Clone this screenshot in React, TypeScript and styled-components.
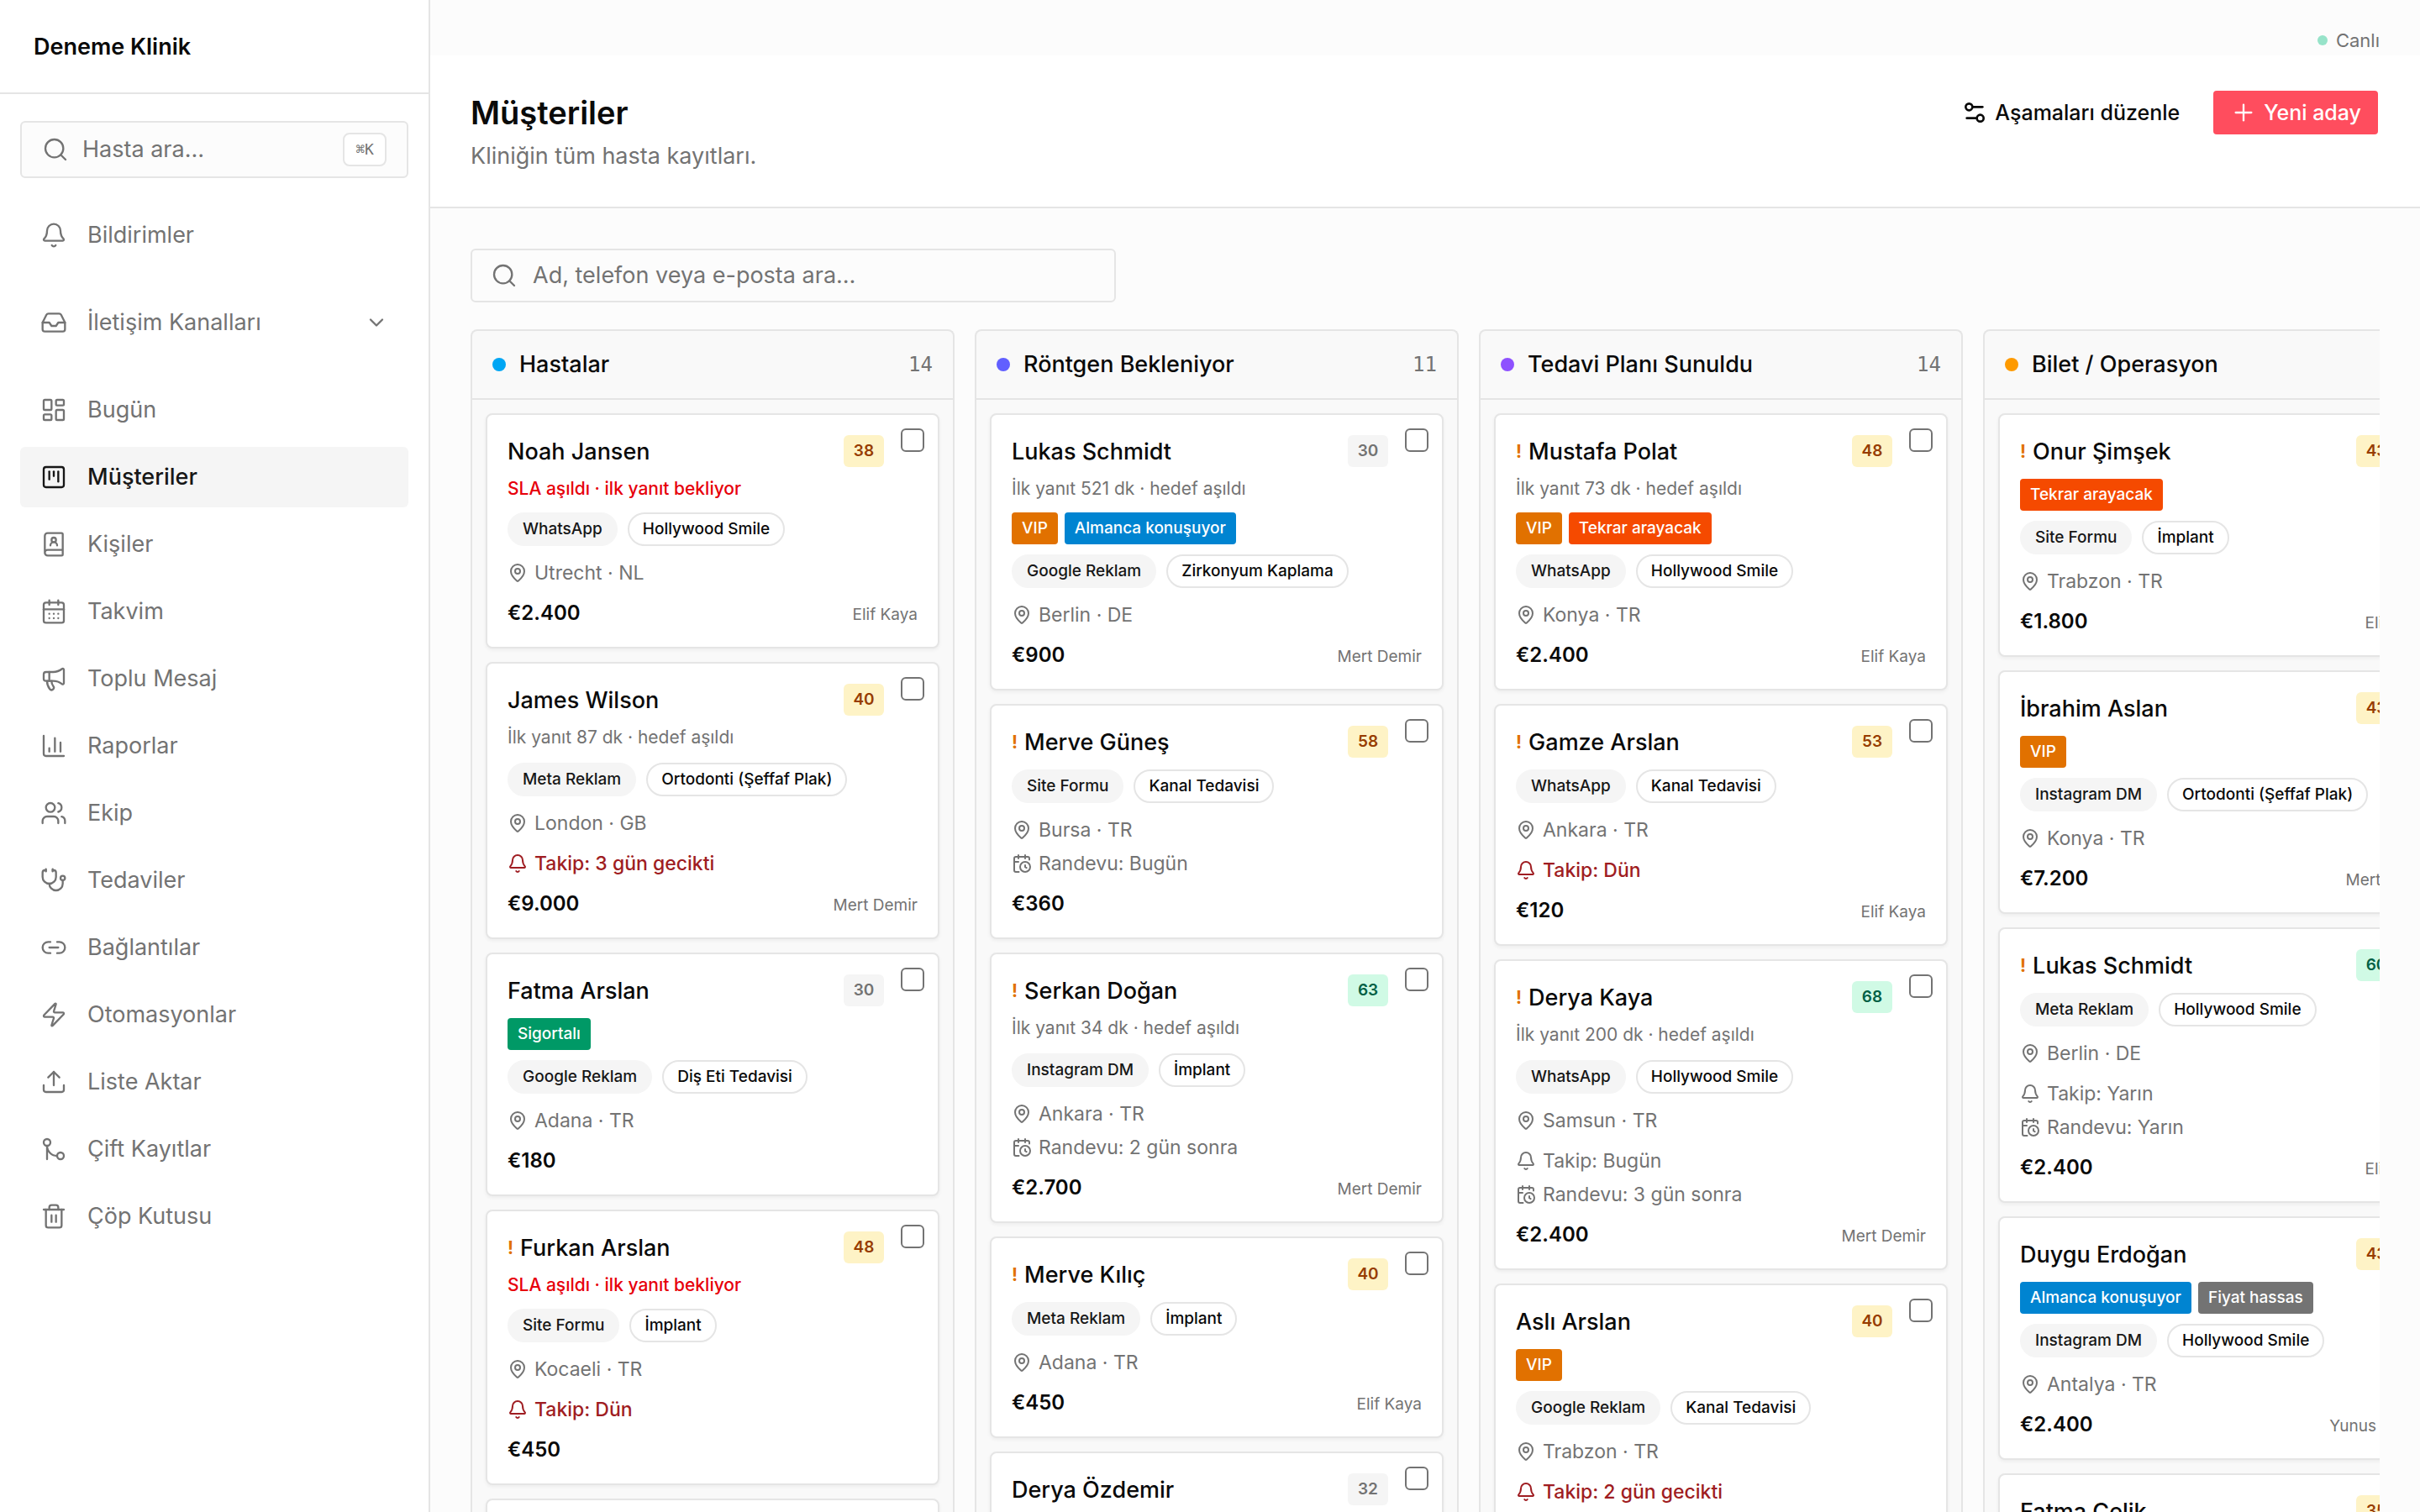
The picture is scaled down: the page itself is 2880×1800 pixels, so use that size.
import React from 'react';
import styled, { createGlobalStyle, css } from 'styled-components';
import {
  Bell,
  BookUser,
  CalendarClock,
  CalendarDays,
  ChartColumn,
  ChevronDown,
  Inbox,
  LayoutDashboard,
  Link2,
  LucideIcon,
  MapPin,
  Megaphone,
  Plus,
  Search,
  Settings2,
  SquareKanban,
  Stethoscope,
  Upload,
  Users,
  Zap,
} from 'lucide-react';

const c = {
  text: '#0a0a0a',
  soft: '#171717',
  muted: '#737373',
  line: '#e5e5e5',
  page: '#fcfcfc',
  panel: '#f9f9f9',
  fill: '#f5f5f5',
  white: '#ffffff',
  brand: '#ff4d5e',
  red: '#e7000b',
  late: '#9f1d22',
  amber: '#e17100',
};

const GlobalStyle = createGlobalStyle`
  *, *::before, *::after { box-sizing: border-box; }
  body {
    margin: 0;
    background: ${c.page};
    color: ${c.text};
    font-family: Inter, "Noto Sans", sans-serif;
    font-size: 28px;
    line-height: 40px;
    -webkit-font-smoothing: antialiased;
  }
  button, input { font: inherit; color: inherit; }
  h1, h2, h3, p, ul { margin: 0; padding: 0; font: inherit; list-style: none; }
`;

/* ---------- Shell ---------- */

const Shell = styled.div`
  display: flex;
  height: 100vh;
  overflow: hidden;
`;

const Sidebar = styled.aside`
  flex: none;
  width: 512px;
  background: ${c.white};
  border-right: 2px solid ${c.line};
`;

const ClinicName = styled.div`
  padding: 36px 40px 34px;
  border-bottom: 2px solid ${c.line};
  font-size: 27px;
  font-weight: 600;
`;

const SideBody = styled.div`
  display: flex;
  flex-direction: column;
  gap: 32px;
  padding: 32px 24px;
`;

const QuickSearch = styled.button`
  display: flex;
  align-items: center;
  gap: 16px;
  height: 68px;
  padding: 0 24px;
  border: 2px solid ${c.line};
  border-radius: 6px;
  background: ${c.page};
  color: ${c.muted};
  font-size: 27px;
  text-align: left;
`;

const Grow = styled.span`
  flex: 1;
`;

const Key = styled.kbd`
  width: 52px;
  border: 2px solid ${c.line};
  border-radius: 8px;
  background: ${c.white};
  font: 18px/36px "DejaVu Sans Mono", monospace;
  text-align: center;
`;

const NavList = styled.ul`
  display: flex;
  flex-direction: column;
  gap: 8px;
`;

const NavLink = styled.a<{ $active?: boolean }>`
  display: flex;
  align-items: center;
  gap: 24px;
  height: 72px;
  padding: 0 24px;
  border-radius: 6px;
  color: ${c.muted};
  font-size: 27px;
  text-decoration: none;
  ${(p) =>
    p.$active &&
    css`
      background: ${c.fill};
      color: ${c.soft};
      font-weight: 500;
    `}
`;

/* ---------- Main ---------- */

const Main = styled.main`
  flex: 1;
  min-width: 0;
  display: flex;
  flex-direction: column;
`;

const LiveBar = styled.div`
  display: flex;
  justify-content: flex-end;
  align-items: center;
  gap: 10px;
  padding: 32px 48px 2px;
  color: ${c.muted};
  font-size: 22px;
  line-height: 32px;
`;

const LiveDot = styled.span`
  width: 12px;
  height: 12px;
  border-radius: 50%;
  background: #97e3c9;
`;

const PageHeader = styled.header`
  display: flex;
  justify-content: space-between;
  align-items: flex-start;
  padding: 40px 48px;
  background: ${c.white};
  border-bottom: 2px solid ${c.line};
`;

const Title = styled.h1`
  font-size: 38px;
  font-weight: 600;
  line-height: 56px;
`;

const Subtitle = styled.p`
  margin-top: 4px;
  color: ${c.muted};
  font-size: 27px;
`;

const Actions = styled.div`
  display: flex;
  gap: 16px;
`;

const Action = styled.button<{ $primary?: boolean }>`
  display: flex;
  align-items: center;
  gap: 8px;
  height: 56px;
  padding: 0 20px;
  border: 2px solid transparent;
  border-radius: 6px;
  background: ${(p) => (p.$primary ? c.brand : 'transparent')};
  background-clip: padding-box;
  color: ${(p) => (p.$primary ? c.white : c.text)};
  font-size: 25px;
  font-weight: 500;
`;

const Body = styled.section`
  flex: 1;
  min-height: 0;
  display: flex;
  flex-direction: column;
  gap: 32px;
  padding: 48px 48px 0;
`;

const SearchField = styled.label`
  flex: none;
  display: flex;
  align-items: center;
  gap: 18px;
  width: 100%;
  max-width: 768px;
  height: 64px;
  padding: 0 22px;
  border: 2px solid ${c.line};
  border-radius: 6px;
  color: ${c.muted};
`;

const SearchInput = styled.input`
  flex: 1;
  min-width: 0;
  padding: 0;
  border: 0;
  outline: 0;
  background: transparent;
  font-size: 27px;
  &::placeholder {
    color: ${c.muted};
    opacity: 1;
  }
`;

/* ---------- Board ---------- */

const Board = styled.div`
  flex: 1;
  min-height: 0;
  display: flex;
  gap: 24px;
  overflow: hidden;
`;

const Column = styled.section`
  flex: none;
  width: 576px;
  background: ${c.panel};
  border: 2px solid ${c.line};
  border-bottom: 0;
  border-radius: 8px 8px 0 0;
`;

const ColumnHead = styled.header`
  display: flex;
  align-items: center;
  gap: 16px;
  height: 82px;
  padding: 0 24px;
  border-bottom: 2px solid ${c.line};
`;

const StageDot = styled.span<{ $color: string }>`
  width: 16px;
  height: 16px;
  border-radius: 50%;
  background: ${(p) => p.$color};
`;

const StageName = styled.h2`
  flex: 1;
  font-size: 27px;
  font-weight: 500;
`;

const Count = styled.span`
  color: ${c.muted};
  font-family: "DejaVu Sans Mono", monospace;
  font-size: 24px;
`;

const Cards = styled.div`
  display: flex;
  flex-direction: column;
  gap: 16px;
  padding: 16px;
`;

const CardBox = styled.article`
  min-height: 240px;
  padding: 24px;
  background: ${c.white};
  border: 2px solid ${c.line};
  border-radius: 8px;
  box-shadow: 0 2px 4px rgba(0, 0, 0, 0.05);
`;

const CardHead = styled.div`
  display: flex;
  align-items: flex-start;
  height: 40px;
`;

const Priority = styled.span`
  margin-right: 8px;
  color: ${c.amber};
  font-size: 21px;
  font-weight: 700;
`;

const Name = styled.h3`
  flex: 1;
  font-size: 27px;
  font-weight: 500;
`;

type Tone = 'amber' | 'green' | 'gray';

const tones: Record<Tone, [string, string]> = {
  amber: ['#fef3c6', '#973c00'],
  green: ['#d0fae5', '#006045'],
  gray: [c.fill, c.muted],
};

const Score = styled.span<{ $tone: Tone }>`
  width: 48px;
  border-radius: 6px;
  background: ${(p) => tones[p.$tone][0]};
  color: ${(p) => tones[p.$tone][1]};
  font-size: 19px;
  font-weight: 600;
  line-height: 38px;
  text-align: center;
`;

const Tick = styled.input`
  appearance: none;
  width: 28px;
  height: 28px;
  margin: -8px -8px 0 20px;
  border: 2px solid ${c.muted};
  border-radius: 6px;
  background: ${c.white};
`;

const Note = styled.p<{ $breach?: boolean }>`
  margin-top: 8px;
  color: ${(p) => (p.$breach ? c.red : c.muted)};
  font-size: 21px;
  font-weight: ${(p) => (p.$breach ? 500 : 400)};
  line-height: 32px;
`;

const TagRow = styled.div`
  display: flex;
  gap: 8px;
  margin-top: 12px;
`;

const Tag = styled.span<{ $color: string }>`
  padding: 0 12px;
  border-radius: 4px;
  background: ${(p) => p.$color};
  color: ${c.white};
  font-size: 19px;
  font-weight: 500;
  line-height: 38px;
`;

const ChipRow = styled.div<{ $loose?: boolean }>`
  display: flex;
  gap: 12px;
  margin-top: ${(p) => (p.$loose ? 14 : 12)}px;
`;

const Chip = styled.span<{ $outline?: boolean }>`
  padding: 0 16px;
  border: 2px solid ${(p) => (p.$outline ? c.line : c.fill)};
  border-radius: 20px;
  background: ${(p) => (p.$outline ? c.white : c.fill)};
  color: ${(p) => (p.$outline ? c.text : c.soft)};
  font-size: 19px;
  font-weight: 500;
  line-height: 36px;
  white-space: nowrap;
`;

const Meta = styled.p<{ $tight?: boolean; $late?: boolean }>`
  display: flex;
  align-items: center;
  gap: 8px;
  margin-top: ${(p) => (p.$tight ? 8 : 16)}px;
  color: ${(p) => (p.$late ? c.late : c.muted)};
  font-size: 23px;
  font-weight: ${(p) => (p.$late ? 500 : 400)};
  line-height: 32px;
`;

const CardFoot = styled.div`
  display: flex;
  align-items: baseline;
  justify-content: space-between;
  height: 32px;
  margin-top: 16px;
  line-height: 32px;
`;

const Price = styled.span`
  font-size: 24px;
  font-weight: 600;
`;

const Owner = styled.span`
  color: ${c.muted};
  font-size: 19px;
`;

/* ---------- Custom icons ---------- */

type IconProps = { size?: number; strokeWidth?: number };

const svgBase = (size: number, strokeWidth: number) => ({
  width: size,
  height: size,
  viewBox: '0 0 24 24',
  fill: 'none',
  stroke: 'currentColor',
  strokeWidth,
  strokeLinecap: 'round' as const,
  strokeLinejoin: 'round' as const,
  'aria-hidden': true,
});

const MergeIcon = ({ size = 32, strokeWidth = 1.75 }: IconProps) => (
  <svg {...svgBase(size, strokeWidth)}>
    <circle cx="18" cy="18" r="3" />
    <circle cx="6" cy="6" r="3" />
    <path d="M6 21V9a9 9 0 0 0 9 9" />
  </svg>
);

const TrashIcon = ({ size = 32, strokeWidth = 1.75 }: IconProps) => (
  <svg {...svgBase(size, strokeWidth)}>
    <path d="M3 6h18" />
    <path d="M19 6v14a2 2 0 0 1-2 2H7a2 2 0 0 1-2-2V6" />
    <path d="M8 6V4a2 2 0 0 1 2-2h4a2 2 0 0 1 2 2v2" />
    <path d="M10 11v6M14 11v6" />
  </svg>
);

/* ---------- Data ---------- */

type Lead = {
  name?: string;
  score?: number;
  priority?: boolean;
  breach?: boolean;
  reply?: number;
  tags?: string[];
  source?: string;
  treatment?: string;
  place?: string;
  follow?: string;
  late?: boolean;
  visit?: string;
  price?: string;
  owner?: string;
};

const tagColors: Record<string, string> = {
  VIP: c.amber,
  'Almanca konuşuyor': '#0084d1',
  'Tekrar arayacak': '#f54a00',
  Sigortalı: '#009966',
  'Fiyat hassas': c.muted,
};

type Stage = { name: string; color: string; count?: number; leads: Lead[] };

const stages: Stage[] = [
  {
    name: 'Hastalar',
    color: '#00a6f4',
    count: 14,
    leads: [
      { name: 'Noah Jansen', score: 38, breach: true, source: 'WhatsApp', treatment: 'Hollywood Smile', place: 'Utrecht · NL', price: '€2.400', owner: 'Elif Kaya' },
      { name: 'James Wilson', score: 40, reply: 87, source: 'Meta Reklam', treatment: 'Ortodonti (Şeffaf Plak)', place: 'London · GB', follow: '3 gün gecikti', late: true, price: '€9.000', owner: 'Mert Demir' },
      { name: 'Fatma Arslan', score: 30, tags: ['Sigortalı'], source: 'Google Reklam', treatment: 'Diş Eti Tedavisi', place: 'Adana · TR', price: '€180' },
      { name: 'Furkan Arslan', score: 48, priority: true, breach: true, source: 'Site Formu', treatment: 'İmplant', place: 'Kocaeli · TR', follow: 'Dün', late: true, price: '€450' },
      {},
    ],
  },
  {
    name: 'Röntgen Bekleniyor',
    color: '#615fff',
    count: 11,
    leads: [
      { name: 'Lukas Schmidt', score: 30, reply: 521, tags: ['VIP', 'Almanca konuşuyor'], source: 'Google Reklam', treatment: 'Zirkonyum Kaplama', place: 'Berlin · DE', price: '€900', owner: 'Mert Demir' },
      { name: 'Merve Güneş', score: 58, priority: true, source: 'Site Formu', treatment: 'Kanal Tedavisi', place: 'Bursa · TR', visit: 'Bugün', price: '€360' },
      { name: 'Serkan Doğan', score: 63, priority: true, reply: 34, source: 'Instagram DM', treatment: 'İmplant', place: 'Ankara · TR', visit: '2 gün sonra', price: '€2.700', owner: 'Mert Demir' },
      { name: 'Merve Kılıç', score: 40, priority: true, source: 'Meta Reklam', treatment: 'İmplant', place: 'Adana · TR', price: '€450', owner: 'Elif Kaya' },
      { name: 'Derya Özdemir', score: 32 },
    ],
  },
  {
    name: 'Tedavi Planı Sunuldu',
    color: '#8e51ff',
    count: 14,
    leads: [
      { name: 'Mustafa Polat', score: 48, priority: true, reply: 73, tags: ['VIP', 'Tekrar arayacak'], source: 'WhatsApp', treatment: 'Hollywood Smile', place: 'Konya · TR', price: '€2.400', owner: 'Elif Kaya' },
      { name: 'Gamze Arslan', score: 53, priority: true, source: 'WhatsApp', treatment: 'Kanal Tedavisi', place: 'Ankara · TR', follow: 'Dün', late: true, price: '€120', owner: 'Elif Kaya' },
      { name: 'Derya Kaya', score: 68, priority: true, reply: 200, source: 'WhatsApp', treatment: 'Hollywood Smile', place: 'Samsun · TR', follow: 'Bugün', visit: '3 gün sonra', price: '€2.400', owner: 'Mert Demir' },
      { name: 'Aslı Arslan', score: 40, tags: ['VIP'], source: 'Google Reklam', treatment: 'Kanal Tedavisi', place: 'Trabzon · TR', follow: '2 gün gecikti', late: true },
    ],
  },
  {
    name: 'Bilet / Operasyon',
    color: '#fe9a00',
    leads: [
      { name: 'Onur Şimşek', score: 43, priority: true, tags: ['Tekrar arayacak'], source: 'Site Formu', treatment: 'İmplant', place: 'Trabzon · TR', price: '€1.800', owner: 'Elif Kaya' },
      { name: 'İbrahim Aslan', score: 43, tags: ['VIP'], source: 'Instagram DM', treatment: 'Ortodonti (Şeffaf Plak)', place: 'Konya · TR', price: '€7.200', owner: 'Mert Demir' },
      { name: 'Lukas Schmidt', score: 60, priority: true, source: 'Meta Reklam', treatment: 'Hollywood Smile', place: 'Berlin · DE', follow: 'Yarın', visit: 'Yarın', price: '€2.400', owner: 'Elif Kaya' },
      { name: 'Duygu Erdoğan', score: 43, tags: ['Almanca konuşuyor', 'Fiyat hassas'], source: 'Instagram DM', treatment: 'Hollywood Smile', place: 'Antalya · TR', price: '€2.400', owner: 'Yunus Doğan' },
      { name: 'Fatma Çelik', score: 35 },
    ],
  },
];

type NavEntry = { label: string; Icon: LucideIcon | React.FC<IconProps>; active?: boolean; expandable?: boolean };

const navGroups: NavEntry[][] = [
  [{ label: 'Bildirimler', Icon: Bell }],
  [{ label: 'İletişim Kanalları', Icon: Inbox, expandable: true }],
  [
    { label: 'Bugün', Icon: LayoutDashboard },
    { label: 'Müşteriler', Icon: SquareKanban, active: true },
    { label: 'Kişiler', Icon: BookUser },
    { label: 'Takvim', Icon: CalendarDays },
    { label: 'Toplu Mesaj', Icon: Megaphone },
    { label: 'Raporlar', Icon: ChartColumn },
    { label: 'Ekip', Icon: Users },
    { label: 'Tedaviler', Icon: Stethoscope },
    { label: 'Bağlantılar', Icon: Link2 },
    { label: 'Otomasyonlar', Icon: Zap },
    { label: 'Liste Aktar', Icon: Upload },
    { label: 'Çift Kayıtlar', Icon: MergeIcon },
    { label: 'Çöp Kutusu', Icon: TrashIcon },
  ],
];

const toneOf = (score: number): Tone => (score >= 60 ? 'green' : score >= 35 ? 'amber' : 'gray');

/* ---------- Parts ---------- */

const LeadCard = ({ lead }: { lead: Lead }) => (
  <CardBox>
    {lead.name && lead.score !== undefined && (
      <CardHead>
        {lead.priority && <Priority>!</Priority>}
        <Name>{lead.name}</Name>
        <Score $tone={toneOf(lead.score)}>{lead.score}</Score>
        <Tick type="checkbox" aria-label={lead.name} />
      </CardHead>
    )}
    {lead.breach && <Note $breach>SLA aşıldı · ilk yanıt bekliyor</Note>}
    {lead.reply && <Note>{`İlk yanıt ${lead.reply} dk · hedef aşıldı`}</Note>}
    {lead.tags && (
      <TagRow>
        {lead.tags.map((tag) => (
          <Tag key={tag} $color={tagColors[tag]}>
            {tag}
          </Tag>
        ))}
      </TagRow>
    )}
    {lead.source && (
      <ChipRow $loose={!!lead.reply && !lead.tags}>
        <Chip>{lead.source}</Chip>
        <Chip $outline>{lead.treatment}</Chip>
      </ChipRow>
    )}
    {lead.place && (
      <Meta>
        <MapPin size={24} strokeWidth={2} />
        {lead.place}
      </Meta>
    )}
    {lead.follow && (
      <Meta $late={lead.late}>
        <Bell size={24} strokeWidth={2} />
        {`Takip: ${lead.follow}`}
      </Meta>
    )}
    {lead.visit && (
      <Meta $tight>
        <CalendarClock size={24} strokeWidth={2} />
        {`Randevu: ${lead.visit}`}
      </Meta>
    )}
    {lead.price && (
      <CardFoot>
        <Price>{lead.price}</Price>
        {lead.owner && <Owner>{lead.owner}</Owner>}
      </CardFoot>
    )}
  </CardBox>
);

export default function App() {
  return (
    <>
      <GlobalStyle />
      <Shell>
        <Sidebar>
          <ClinicName>Deneme Klinik</ClinicName>
          <SideBody>
            <QuickSearch type="button">
              <Search size={32} strokeWidth={1.75} />
              <Grow>Hasta ara…</Grow>
              <Key>⌘K</Key>
            </QuickSearch>
            {navGroups.map((group) => (
              <NavList key={group[0].label}>
                {group.map(({ label, Icon, active, expandable }) => (
                  <li key={label}>
                    <NavLink href="#" $active={active}>
                      <Icon size={32} strokeWidth={1.75} />
                      <Grow>{label}</Grow>
                      {expandable && <ChevronDown size={28} strokeWidth={2} />}
                    </NavLink>
                  </li>
                ))}
              </NavList>
            ))}
          </SideBody>
        </Sidebar>
        <Main>
          <LiveBar>
            <LiveDot />
            Canlı
          </LiveBar>
          <PageHeader>
            <div>
              <Title>Müşteriler</Title>
              <Subtitle>Kliniğin tüm hasta kayıtları.</Subtitle>
            </div>
            <Actions>
              <Action type="button">
                <Settings2 size={32} strokeWidth={2} />
                Aşamaları düzenle
              </Action>
              <Action type="button" $primary>
                <Plus size={32} strokeWidth={1.75} />
                Yeni aday
              </Action>
            </Actions>
          </PageHeader>
          <Body>
            <SearchField>
              <Search size={32} strokeWidth={1.75} />
              <SearchInput type="text" placeholder="Ad, telefon veya e-posta ara…" aria-label="Ad, telefon veya e-posta ara…" />
            </SearchField>
            <Board>
              {stages.map((stage) => (
                <Column key={stage.name}>
                  <ColumnHead>
                    <StageDot $color={stage.color} />
                    <StageName>{stage.name}</StageName>
                    {stage.count && <Count>{stage.count}</Count>}
                  </ColumnHead>
                  <Cards>
                    {stage.leads.map((lead, i) => (
                      <LeadCard key={i} lead={lead} />
                    ))}
                  </Cards>
                </Column>
              ))}
            </Board>
          </Body>
        </Main>
      </Shell>
    </>
  );
}
